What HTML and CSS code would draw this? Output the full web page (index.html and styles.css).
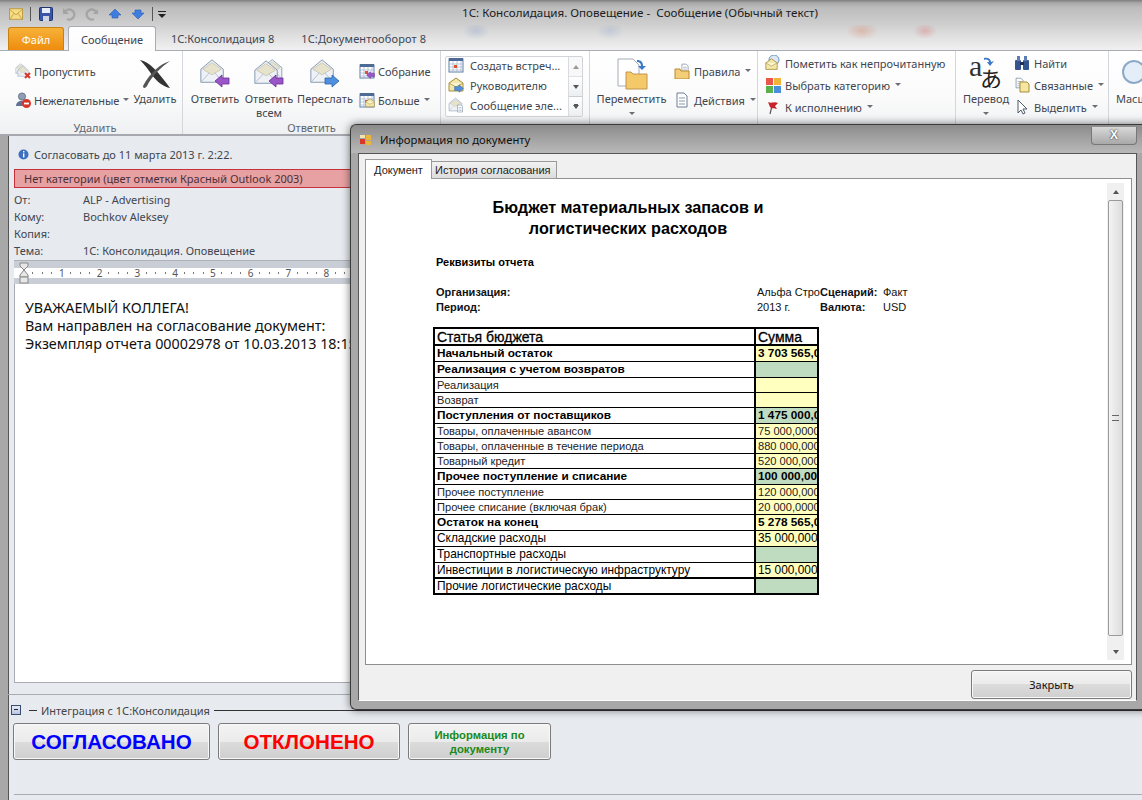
FILE: index.html
```html
<!DOCTYPE html>
<html lang="ru">
<head>
<meta charset="utf-8">
<title>1С: Консолидация. Оповещение - Сообщение</title>
<link rel="stylesheet" href="styles.css">
</head>
<body>
<svg class="defs" width="0" height="0">
  <defs>
    <symbol id="env" viewBox="0 0 30 30">
      <path d="M2 12 L14 2 L26 12 V26 H2Z" fill="#eef1f5" stroke="#7d93ad"/>
      <path d="M4 12 L14 5 L24 12 L14 18Z" fill="#e6e2cc" stroke="#b5b29a" stroke-width=".6"/>
      <path d="M2 26 L11 16 M26 26 L17 16" stroke="#b4c0cf" fill="none"/>
    </symbol>
    <symbol id="arrL" viewBox="0 0 16 14"><path d="M1 7 L8 1 V4 H15 V10 H8 V13Z" fill="#9a55c8" stroke="#6b2c96" stroke-width=".8"/></symbol>
    <symbol id="arrR" viewBox="0 0 16 14"><path d="M15 7 L8 1 V4 H1 V10 H8 V13Z" fill="#4f8fe0" stroke="#2c62a8" stroke-width=".8"/></symbol>
    <symbol id="cal" viewBox="0 0 16 16"><rect x="1" y="2" width="14" height="13" fill="#fff" stroke="#5f7ea8"/><rect x="1" y="1" width="14" height="3" fill="#4d6b94"/><path d="M1 7H15M1 10H15M1 13H15M5 4V15M9 4V15M13 4V15" stroke="#9db3cf" stroke-width=".7"/><rect x="6" y="8" width="3" height="3" fill="#e0532f"/></symbol>
    <symbol id="mini" viewBox="0 0 16 16"><path d="M1 6 L8 1 L15 6 V14 H1Z" fill="#f2e6a8" stroke="#a48d3c"/><path d="M1 6 L8 10 L15 6" fill="#fbf5d2" stroke="#a48d3c" stroke-width=".7"/></symbol>
    <symbol id="folder" viewBox="0 0 16 16"><path d="M1 4 H6 L7 6 H15 V14 H1Z" fill="#f4cd78" stroke="#b98a2e"/></symbol>
    <symbol id="doc" viewBox="0 0 16 16"><path d="M3 1 H10 L13 4 V15 H3Z" fill="#fff" stroke="#6d7f96"/><path d="M5 6H11M5 9H11M5 12H11" stroke="#8b99aa"/></symbol>
  </defs>
</svg>

<div class="app">
  <header class="titlebar">
    <div class="qat">
      <svg class="i14" viewBox="0 0 16 14"><rect x=".5" y="1" width="15" height="12" fill="#f6dd85" stroke="#b8973a"/><path d="M1 2 L8 8 L15 2 M1 13 L6 6 M15 13 L10 6" fill="none" stroke="#c69f3f"/></svg>
      <span class="qsep"></span>
      <svg class="i14" viewBox="0 0 14 14"><rect x=".5" y=".5" width="13" height="13" rx="1" fill="#3a56a8" stroke="#22346e"/><rect x="3" y="1" width="8" height="5" fill="#e8eef8"/><rect x="4" y="9" width="6" height="5" fill="#cfd6e2"/></svg>
      <svg class="i14 dim" viewBox="0 0 14 14"><path d="M3 5 A5 5 0 1 1 5 12" fill="none" stroke="#8c8c8c" stroke-width="2.4"/><path d="M1 1 V7 H7Z" fill="#8c8c8c"/></svg>
      <svg class="i14 dim" viewBox="0 0 14 14"><path d="M11 5 A5 5 0 1 0 9 12" fill="none" stroke="#8c8c8c" stroke-width="2.4"/><path d="M13 2 V7 H8Z" fill="#8c8c8c"/></svg>
      <svg class="i14" viewBox="0 0 14 12"><path d="M7 1 L13 7 H10 V10 H4 V7 H1Z" fill="#3f7ee0" stroke="#2a5cb4" stroke-width=".6"/></svg>
      <svg class="i14" viewBox="0 0 14 12"><path d="M7 11 L13 5 H10 V2 H4 V5 H1Z" fill="#3f7ee0" stroke="#2a5cb4" stroke-width=".6"/></svg>
      <span class="qsep"></span>
      <svg class="qdrop" viewBox="0 0 8 8"><path d="M0 1H8V2H0ZM0 4H8L4 8Z" fill="#222"/></svg>
    </div>
    <div class="wintitle">1С: Консолидация. Оповещение -&nbsp; Сообщение (Обычный текст)</div>
  </header>

  <nav class="tabs">
    <span class="tab-file">Файл</span>
    <span class="tab-active">Сообщение</span>
    <span class="tab t1">1С:Консолидация 8</span>
    <span class="tab t2">1С:Документооборот 8</span>
  </nav>

  <section class="ribbon">
    <div class="grp g-del">
      <div class="grp-body">
        <div class="col two c-del">
          <div class="sm"><svg class="i16" viewBox="0 0 16 16"><use href="#env" width="12" height="12" x="0" y="0"/><use href="#env" width="13" height="13" x="2" y="2"/><path d="M10 10 L15 15 M15 10 L10 15" stroke="#d8362a" stroke-width="2"/></svg>Пропустить</div>
          <div class="sm"><svg class="i16" viewBox="0 0 16 16"><circle cx="7" cy="4.5" r="3.6" fill="#8d9db3" stroke="#4f5f78" stroke-width=".7"/><path d="M1 14 C1 7 13 7 13 14Z" fill="#5f7290"/><circle cx="11.5" cy="11.5" r="4.5" fill="#d8362a"/><path d="M9 11.5H14" stroke="#fff" stroke-width="1.8"/></svg>Нежелательные <i class="caret"></i></div>
        </div>
        <div class="big b-del">
          <svg class="ico32" viewBox="0 0 32 32"><path d="M1 2 C10 3 20 15 31 30 C25 29 18 24 13 17 C9 11 5 6 1 2Z" fill="#333"/><path d="M31 3 C21 6 11 15 4 28 C4 31 7 30 8 28 C13 18 22 9 31 3Z" fill="#555"/></svg>
          <span>Удалить</span>
        </div>
      </div>
      <div class="grp-label">Удалить</div>
    </div>

    <div class="grp g-rep">
      <div class="grp-body">
        <div class="big b-rep1">
          <svg class="ico32" viewBox="0 0 32 32"><use href="#env" width="28" height="28" x="0" y="0"/><use href="#arrL" width="16" height="14" x="15" y="16"/></svg>
          <span>Ответить</span>
        </div>
        <div class="big b-rep2">
          <svg class="ico32" viewBox="0 0 32 32"><use href="#env" width="24" height="24" x="8" y="0"/><use href="#env" width="28" height="28" x="0" y="1"/><use href="#arrL" width="16" height="14" x="15" y="16"/></svg>
          <span>Ответить<br>всем</span>
        </div>
        <div class="big b-rep3">
          <svg class="ico32" viewBox="0 0 32 32"><use href="#env" width="28" height="28" x="0" y="0"/><use href="#arrR" width="16" height="14" x="15" y="16"/></svg>
          <span>Переслать</span>
        </div>
        <div class="col two c-rep">
          <div class="sm"><svg class="i16" viewBox="0 0 16 16"><use href="#cal"/><use href="#arrL" width="9" height="8" x="7" y="8"/></svg>Собрание</div>
          <div class="sm"><svg class="i16" viewBox="0 0 16 16"><use href="#cal"/><use href="#mini" width="10" height="10" x="6" y="6"/></svg>Больше <i class="caret"></i></div>
        </div>
      </div>
      <div class="grp-label">Ответить</div>
    </div>

    <div class="grp g-qs">
      <div class="grp-body">
        <div class="qs">
          <div class="qs-list">
            <div class="qs-item"><svg class="i16" viewBox="0 0 16 16"><use href="#cal"/></svg>Создать встреч...</div>
            <div class="qs-item"><svg class="i16" viewBox="0 0 16 16"><use href="#mini"/><use href="#arrR" width="10" height="9" x="6" y="7"/></svg>Руководителю</div>
            <div class="qs-item"><svg class="i16" viewBox="0 0 16 16"><use href="#env" width="16" height="16"/><use href="#doc" width="8" height="9" x="8" y="7"/></svg>Сообщение эле...</div>
          </div>
          <div class="qs-scroll">
            <span class="qs-b off"><i class="up"></i></span>
            <span class="qs-b"><i class="down"></i></span>
            <span class="qs-b"><i class="down bar"></i></span>
          </div>
        </div>
      </div>
      <div class="grp-label">Быстрые действия</div>
    </div>

    <div class="grp g-mv">
      <div class="grp-body">
        <div class="big b-mv">
          <svg class="ico32" viewBox="0 0 32 32"><path d="M2 1 H17 L23 7 V28 H2Z" fill="#fff" stroke="#a5adb8"/><path d="M10 14 H15 L17 16 H31 V31 H10Z" fill="#f4c969" stroke="#c2954a"/><path d="M21 2 C25 2 27 4 27 8 H30 L26 12 L22 8 H25 C25 6 24 4 21 4Z" fill="#3a78c8"/></svg>
          <span>Переместить<br><i class="caret"></i></span>
        </div>
        <div class="col two c-mv">
          <div class="sm"><svg class="i16" viewBox="0 0 16 16"><use href="#doc" width="10" height="11" x="6" y="0"/><use href="#folder" x="0" y="2"/></svg>Правила <i class="caret"></i></div>
          <div class="sm"><svg class="i16" viewBox="0 0 16 16"><use href="#doc"/></svg>Действия <i class="caret"></i></div>
        </div>
      </div>
      <div class="grp-label">Переместить</div>
    </div>

    <div class="grp g-tag">
      <div class="grp-body">
        <div class="col three c-tag">
          <div class="sm"><svg class="i16" viewBox="0 0 16 16"><circle cx="9" cy="5" r="5" fill="#dce8f6" stroke="#6c94c4"/><use href="#mini" width="13" height="13" x="0" y="3"/></svg>Пометить как непрочитанную</div>
          <div class="sm"><svg class="i16" viewBox="0 0 16 16"><rect width="7" height="7" x="1" y="1" fill="#e8574a"/><rect width="7" height="7" x="9" y="1" fill="#f2b33c"/><rect width="7" height="7" x="1" y="9" fill="#5bb24d"/><rect width="7" height="7" x="9" y="9" fill="#4a8fdc"/></svg>Выбрать категорию <i class="caret"></i></div>
          <div class="sm"><svg class="i16" viewBox="0 0 16 16"><path d="M5 15 L7 7" stroke="#555" stroke-width="1.2"/><path d="M3 3 C6 5 9 2 13 4 L10 7 L12 10 C9 9 6 10 5 8Z" fill="#c8222a"/></svg>К исполнению <i class="caret"></i></div>
        </div>
      </div>
      <div class="grp-label">Теги</div>
    </div>

    <div class="grp g-ed">
      <div class="grp-body">
        <div class="big b-tr">
          <svg class="ico32" viewBox="0 0 34 32"><text x="0" y="20" class="gl-a">a</text><text x="11" y="31" class="gl-j">あ</text><path d="M15 2 C19 1 22 3 22 6 L25 5 L21 10 L18 6 H20 C20 4 18 3 15 4Z" fill="#3a78c8"/></svg>
          <span>Перевод<br><i class="caret"></i></span>
        </div>
        <div class="col three c-ed">
          <div class="sm"><svg class="i16" viewBox="0 0 16 16"><rect x="1" y="5" width="6" height="10" rx="1" fill="#35558f"/><rect x="9" y="5" width="6" height="10" rx="1" fill="#35558f"/><rect x="3" y="1" width="3" height="5" fill="#5e7db5"/><rect x="10" y="1" width="3" height="5" fill="#5e7db5"/><rect x="6" y="7" width="4" height="3" fill="#1d2f55"/></svg>Найти</div>
          <div class="sm"><svg class="i16" viewBox="0 0 16 16"><use href="#doc" width="11" height="12" x="0" y="0"/><path d="M6 5 H13 L15 7 V15 H6Z" fill="#f6e6a0" stroke="#a58d3c"/></svg>Связанные <i class="caret"></i></div>
          <div class="sm"><svg class="i16" viewBox="0 0 16 16"><path d="M4 1 V14 L7 11 L9 15 L11 14 L9 10 H13Z" fill="#fff" stroke="#4d5a6c"/></svg>Выделить <i class="caret"></i></div>
        </div>
      </div>
      <div class="grp-label">Редактирование</div>
    </div>

    <div class="grp g-zoom">
      <div class="grp-body">
        <div class="big b-zoom">
          <svg class="ico32" viewBox="0 0 32 32"><circle cx="18" cy="14" r="11" fill="#e4eef8" stroke="#8ba8c8" stroke-width="2"/></svg>
          <span>Масштаб</span>
        </div>
      </div>
      <div class="grp-label">Масштаб</div>
    </div>
  </section>

  <main class="message">
    <div class="infobar">
      <svg class="i11" viewBox="0 0 11 11"><circle cx="5.5" cy="5.5" r="5" fill="#3f6fc0"/><rect x="5" y="2" width="1.4" height="1.4" fill="#fff"/><rect x="5" y="4.4" width="1.4" height="4" fill="#fff"/></svg>
      Согласовать до 11 марта 2013 г. 2:22.
    </div>
    <div class="catbar">Нет категории (цвет отметки Красный Outlook 2003)</div>
    <dl class="fields">
      <dt>От:</dt><dd>ALP - Advertising</dd>
      <dt>Кому:</dt><dd>Bochkov Aleksey</dd>
      <dt>Копия:</dt><dd></dd>
      <dt>Тема:</dt><dd>1С: Консолидация. Оповещение</dd>
    </dl>
    <div class="ruler">
      <div class="ruler-scale">
        <span>1</span><span>2</span><span>3</span><span>4</span><span>5</span><span>6</span><span>7</span><span>8</span><span>9</span>
      </div>
      <svg class="ruler-mark" viewBox="0 0 10 22" width="10" height="22"><path d="M1 1H9V4L5 8L1 4Z" fill="#e7e7e7" stroke="#888"/><path d="M5 8L9 13V15H1V13Z" fill="#e7e7e7" stroke="#888"/><rect x="1" y="15" width="8" height="6" fill="#e7e7e7" stroke="#888"/></svg>
    </div>
    <div class="body-text">
      <p>УВАЖАЕМЫЙ КОЛЛЕГА!</p>
      <p>Вам направлен на согласование документ:</p>
      <p>Экземпляр отчета 00002978 от 10.03.2013 18:15:47</p>
    </div>
    <div class="integr">
      <div class="integr-head">
        <span class="minus"></span>
        <span class="dash"></span>
        <span class="integr-title">Интеграция с 1С:Консолидация</span>
        <span class="rule"></span>
      </div>
      <div class="actions">
        <button class="btn b-ok">СОГЛАСОВАНО</button>
        <button class="btn b-no">ОТКЛОНЕНО</button>
        <button class="btn b-info">Информация по документу</button>
      </div>
    </div>
  </main>

  <div class="dialog">
    <div class="dlg-title">
      <svg class="i13" viewBox="0 0 13 13"><rect x="1" y="6" width="5" height="5" fill="#d8372c"/><rect x="7" y="2" width="5" height="5" fill="#e9b53a"/><rect x="7" y="8" width="5" height="4" fill="#e9b53a"/><rect x="1" y="2" width="5" height="3" fill="#f2e4b0"/></svg>
      <span>Информация по документу</span>
      <span class="dlg-x">X</span>
    </div>
    <div class="dlg-panel">
      <div class="dlg-tabs">
        <span class="dtab on">Документ</span>
        <span class="dtab">История согласования</span>
      </div>
      <div class="dlg-content">
        <div class="report">
          <h1>Бюджет материальных запасов и<br>логистических расходов</h1>
          <h2>Реквизиты отчета</h2>
          <div class="meta">
            <b>Организация:</b><span class="clip">Альфа Строй</span><b>Сценарий:</b><span>Факт</span>
            <b>Период:</b><span>2013 г.</span><b>Валюта:</b><span>USD</span>
          </div>
          <table class="budget">
            <colgroup><col class="c1"><col class="c2"></colgroup>
            <tr class="r-h"><td>Статья бюджета</td><td>Сумма</td></tr>
            <tr class="r-b"><td>Начальный остаток</td><td class="y">3 703 565,00</td></tr>
            <tr class="r-b"><td>Реализация с учетом возвратов</td><td class="g"></td></tr>
            <tr class="r-s"><td>Реализация</td><td class="y"></td></tr>
            <tr class="r-s"><td>Возврат</td><td class="y"></td></tr>
            <tr class="r-b"><td>Поступления от поставщиков</td><td class="g">1 475 000,00</td></tr>
            <tr class="r-s"><td>Товары, оплаченные авансом</td><td class="y">75 000,00000</td></tr>
            <tr class="r-s"><td>Товары, оплаченные в течение периода</td><td class="y">880 000,00000</td></tr>
            <tr class="r-s"><td>Товарный кредит</td><td class="y">520 000,00000</td></tr>
            <tr class="r-b"><td>Прочее поступление и списание</td><td class="g">100 000,0000</td></tr>
            <tr class="r-s"><td>Прочее поступление</td><td class="y">120 000,00000</td></tr>
            <tr class="r-s"><td>Прочее списание (включая брак)</td><td class="y">20 000,00000</td></tr>
            <tr class="r-b"><td>Остаток на конец</td><td class="y">5 278 565,00</td></tr>
            <tr class="r-m"><td>Складские расходы</td><td class="y">35 000,00000</td></tr>
            <tr class="r-m"><td>Транспортные расходы</td><td class="g"></td></tr>
            <tr class="r-m"><td>Инвестиции в логистическую инфраструктуру</td><td class="y">15 000,00000</td></tr>
            <tr class="r-m r-last"><td>Прочие логистические расходы</td><td class="g"></td></tr>
          </table>
        </div>
        <div class="vscroll">
          <span class="vs-btn"><i class="up"></i></span>
          <span class="vs-thumb"><i class="grip"></i></span>
          <span class="vs-btn"><i class="down"></i></span>
        </div>
      </div>
      <div class="dlg-foot"><button class="btn b-close">Закрыть</button></div>
    </div>
  </div>
</div>
</body>
</html>
```

FILE: styles.css
```css
* { box-sizing: border-box; }
html, body { margin: 0; padding: 0; }
body { width: 1142px; height: 800px; overflow: hidden; font-family: "Noto Sans", "Open Sans", sans-serif; font-size: 11px; color: #3f4650; }
.defs { position: absolute; }
svg { display: block; flex: none; }
.app { position: relative; width: 1142px; height: 800px; overflow: hidden; background: #e7eaef; display: flex; flex-direction: column; }

.titlebar { height: 25px; flex: none; display: flex; align-items: center; position: relative; padding: 3px 0 0 9px;
  background: linear-gradient(#7e7e7e 0, #a9a9a9 3px, #bdbdbd 8px, #cfcfcf 25px); }
.qat { display: flex; align-items: center; gap: 8px; }
.i14 { width: 14px; height: 14px; }
.dim { opacity: .55; }
.qsep { width: 1px; height: 14px; background: #555; margin: 0 0 0 -1px; }
.qat svg.i14 + svg.i14 { margin-left: 1px; }
.qdrop { width: 8px; height: 8px; margin-left: -3px; }
.wintitle { position: absolute; left: 462px; top: 5px; font-size: 11.6px; color: #1c1c1c; white-space: nowrap; }

.tabs { height: 26px; flex: none; display: flex; align-items: flex-end; padding-left: 8px; position: relative; font-size: 11px; color: #3d4654;
  background:
    radial-gradient(ellipse 14px 9px at 476px 6px, rgba(120,150,200,.28), transparent),
    radial-gradient(ellipse 14px 9px at 610px 6px, rgba(120,150,200,.22), transparent),
    radial-gradient(ellipse 16px 9px at 862px 6px, rgba(220,120,80,.32), transparent),
    radial-gradient(ellipse 12px 8px at 925px 6px, rgba(220,80,80,.28), transparent),
    linear-gradient(#cfcfcf 0, #dedede 10px, #f2f2f2 26px);
  border-bottom: 1px solid #a9adb3; }
.tab-file { width: 56px; height: 23px; color: #fff; display: flex; align-items: center; justify-content: center; border-radius: 3px 3px 0 0; border: 1px solid #c9800e; border-bottom: 0; background: linear-gradient(#f7b23a, #ee8c0d); }
.tab-active { width: 88px; height: 25px; margin: 0 0 -1px 4px; display: flex; align-items: center; justify-content: center; background: linear-gradient(#fff, #fbfbfb); border: 1px solid #a9adb3; border-bottom: 0; border-radius: 3px 3px 0 0; position: relative; }
.tab { height: 24px; display: flex; align-items: center; white-space: nowrap; }
.t1 { margin-left: 15px; }
.t2 { margin-left: 27px; letter-spacing: .15px; }

.ribbon { height: 85px; flex: none; display: flex; padding-left: 8px; border-bottom: 2px solid #a6aab0; background: linear-gradient(#fff 0, #fbfbfb 45px, #eef0f2 84px); color: #3f4650; position: relative; }
.grp { display: flex; flex-direction: column; border-right: 1px solid #d3d6da; flex: none; }
.grp-body { height: 70px; display: flex; flex: none; }
.grp-label { text-align: center; color: #5f6670; line-height: 14px; }
.g-del { width: 175px; }
.g-rep { width: 258px; }
.g-qs { width: 149px; }
.g-mv { width: 168px; }
.g-tag { width: 198px; }
.g-ed { width: 153px; }
.g-zoom { width: 40px; border-right: 0; }
.col { display: flex; flex-direction: column; }
.two { padding-top: 12px; gap: 13px; }
.three { padding-top: 4px; gap: 6px; }
.sm { display: flex; align-items: center; gap: 3px; height: 16px; white-space: nowrap; }
.i16 { width: 16px; height: 16px; }
.caret { display: inline-block; width: 0; height: 0; border: 3px solid transparent; border-top: 3px solid #6a6f77; border-bottom: 0; margin: 0 0 1px 1px; vertical-align: middle; }
.big { display: flex; flex-direction: column; align-items: center; text-align: center; padding-top: 7px; line-height: 14px; white-space: nowrap; }
.big span { margin-top: 2px; }
.big .caret { margin-left: 0; }
.ico32 { width: 32px; height: 32px; }
.c-del { width: 122px; padding-left: 7px; }
.b-del { width: 50px; }
.b-rep1 { width: 50px; margin-left: 7px; }
.b-rep2 { width: 50px; margin-left: 4px; }
.b-rep3 { width: 56px; margin-left: 3px; }
.c-rep { margin-left: 6px; }
.qs { display: flex; width: 138px; height: 61px; margin: 5px 0 0 4px; border: 1px solid #d0d3d8; border-radius: 2px; background: #fff; }
.qs-list { flex: 1; margin-top: -2px; padding-left: 2px; }
.qs-item { display: flex; align-items: center; gap: 6px; height: 20px; white-space: nowrap; }
.qs-scroll { width: 14px; display: flex; flex-direction: column; border-left: 1px solid #d8dbdf; }
.qs-b { flex: 1; display: flex; align-items: center; justify-content: center; border-bottom: 1px solid #c9ccd1; background: linear-gradient(#fff, #eceef0); }
.qs-b:last-child { border-bottom: 0; }
.qs-b.off { background: #f4f5f6; opacity: .6; }
.up { width: 0; height: 0; border: 3px solid transparent; border-bottom: 4px solid #555; border-top: 0; display: block; }
.down { width: 0; height: 0; border: 3px solid transparent; border-top: 4px solid #555; border-bottom: 0; display: block; }
.down.bar { box-shadow: 0 -2px 0 -1px #555; }
.b-mv { width: 81px; margin-left: 1px; margin-right: 2px; }
.c-mv .sm { gap: 4px; }
.c-tag { margin-left: 7px; }
.c-tag .sm { gap: 4px; }
.b-tr { width: 50px; margin-left: 5px; padding-top: 5px; }
.b-tr span { margin-top: 4px; }
.b-tr .ico32 { width: 34px; }
.gl-a { font: 30px "Liberation Serif", serif; fill: #333; }
.gl-j { font: 22px "Noto Sans CJK JP", sans-serif; fill: #222; }
.c-ed { margin-left: 3px; }
.c-ed .sm { gap: 4px; }
.b-zoom { width: 40px; margin-left: 7px; align-items: flex-start; }

.message { flex: 1; min-height: 0; position: relative; display: flex; flex-direction: column; background: #e7eaef; border-left: 8px solid #a8a8a8; padding-left: 6px; box-shadow: inset 1px 0 0 #555; }
.infobar { height: 33px; display: flex; align-items: center; gap: 5px; padding: 4px 0 0 4px; }
.i11 { width: 11px; height: 11px; }
.catbar { height: 19px; padding-left: 9px; display: flex; align-items: center; background: #e8a1a3; border: 1px solid #c8303c; color: #4a3038; }
.fields { margin: 3px 0 0; display: grid; grid-template-columns: 69px 1fr; grid-auto-rows: 17px; line-height: 17px; }
.fields dt, .fields dd { margin: 0; }
.ruler { height: 24px; margin-top: 1px; background: #c9ced6; position: relative; border-top: 1px solid #aeb3ba; flex: none; }
.ruler-scale { position: absolute; left: 0; right: 0; top: 7px; height: 10px; display: flex; padding-left: 43px; font-size: 10px; line-height: 10px; color: #555; gap: 28.2px;
  background-color: #fff;
  background-image: repeating-linear-gradient(90deg, #777 0, #777 1px, transparent 1px, transparent 9.45px);
  background-size: 100% 2px; background-position: 9px 4px; background-repeat: no-repeat; }
.ruler-scale span { width: 9.6px; text-align: center; background: #fff; }
.ruler-mark { position: absolute; left: 5px; top: 1px; }
.body-text { height: 399px; background: #fff; padding: 15px 0 0 10px; font-size: 14.33px; line-height: 18px; color: #101010; border-left: 1px solid #a9adb3; border-bottom: 1px solid #a9adb3; white-space: nowrap; overflow: hidden; flex: none; }
.body-text p { margin: 0; }
.integr { margin: 11px 0 0 -6px; border-top: 1px solid #a9adb3; padding-top: 7px; flex: 1; position: relative; }
.integr::after { content: ""; display: block; position: absolute; left: 6px; right: 0; bottom: 0; height: 5px; border-top: 1px solid #a9adb3; }
.integr-head { display: flex; align-items: center; gap: 4px; height: 16px; margin-left: 3px; }
.minus { width: 10px; height: 10px; border: 1px solid #3a4a70; background: linear-gradient(#e6ecf6, #b9c6de); position: relative; }
.minus::after { content: ""; position: absolute; left: 2px; top: 3px; width: 4px; height: 1px; background: #223; }
.dash { width: 8px; height: 1px; background: #333; margin-left: 4px; }
.integr-title { white-space: nowrap; color: #444; font-size: 11px; }
.rule { flex: 1; height: 1px; background: #333; }
.actions { display: flex; gap: 8px; margin: 5px 0 0 5px; }
.btn { height: 37px; border: 1px solid #7b7b7b; border-radius: 3px; padding: 0; font-family: "Liberation Sans", sans-serif; background: linear-gradient(#f3f3f3 0, #ebebeb 50%, #dcdcdc 50%, #cfcfcf 100%); box-shadow: inset 0 0 0 1px #f8f8f8; }
.b-ok { width: 197px; color: #0000ff; font-size: 20.6px; font-weight: bold; }
.b-no { width: 182px; color: #ff0000; font-size: 20.6px; font-weight: bold; }
.b-info { width: 143px; color: #1a8a1a; font-size: 11.3px; font-weight: bold; line-height: 14px; padding: 0 22px; }

.dialog { position: absolute; left: 350px; top: 124px; width: 800px; height: 586px; border: 1px solid #3a3a3a; border-right: 0; border-radius: 6px 0 0 6px; box-shadow: 0 0 8px rgba(0,0,0,.55); display: flex; flex-direction: column; padding: 0 13px 8px 7px;
  background: linear-gradient(#8b8b8b 0, #a3a3a3 14px, #b8b8b8 28px, #a8a8a8 28px); }
.dlg-title { height: 28px; display: flex; align-items: center; gap: 8px; font-size: 11.3px; color: #111; position: relative; flex: none; padding-left: 1px; }
.i13 { width: 13px; height: 13px; }
.dlg-x { position: absolute; left: 733px; top: 2px; width: 46px; height: 18px; border: 1px solid #777; border-top: 0; border-radius: 0 0 4px 4px; background: linear-gradient(#d8d8d8, #a9a9a9); font: bold 12px "Liberation Sans", sans-serif; color: #fff; text-align: center; line-height: 17px; text-shadow: 0 0 2px #000; }
.dlg-panel { flex: 1; min-height: 0; background: #f0f0f0; border: 1px solid #555; border-bottom-color: #fff; padding: 5px 4px 0 6px; display: flex; flex-direction: column; font-family: "Liberation Sans", sans-serif; }
.dlg-tabs { display: flex; align-items: flex-end; height: 20px; flex: none; font-size: 11px; color: #222; position: relative; z-index: 1; margin-bottom: -1px; }
.dtab { height: 18px; padding: 0 3px; display: flex; align-items: center; border: 1px solid #9a9a9a; border-left: 0; background: linear-gradient(#f2f2f2, #dcdcdc); white-space: nowrap; width: 125px; }
.dtab.on { height: 20px; width: 67px; justify-content: center; background: #fff; border-left: 1px solid #9a9a9a; border-bottom: 0; }
.dlg-content { height: 487px; flex: none; background: #fff; border: 1px solid #8f8f8f; display: flex; justify-content: space-between; padding: 4px 7px 4px 0; }
.report { width: 470px; color: #000; padding: 14px 0 0 67px; font-family: "Liberation Sans", sans-serif; }
.report h1 { margin: 0; width: 390px; text-align: center; font-size: 16.2px; line-height: 21px; font-weight: bold; }
.report h2 { margin: 16px 0 0 3px; font-size: 11px; line-height: 14px; font-weight: bold; }
.meta { margin: 16px 0 0 3px; display: grid; grid-template-columns: 321px 63px 63px 60px; grid-auto-rows: 15px; line-height: 15px; font-size: 11px; color: #111; white-space: nowrap; }
.meta .clip { overflow: hidden; }
.budget { margin: 12px 0 0; width: 384px; table-layout: fixed; border-collapse: collapse; border: 2px solid #000; color: #000; }
.c1 { width: 321px; }
.c2 { width: 63px; }
.budget td { padding: 1px 0 0 2px; border: 1px solid #000; white-space: nowrap; overflow: hidden; }
.budget td:first-child { border-right: 2px solid #000; }
.r-h td { height: 17px; font-size: 14px; line-height: 14px; border-bottom: 2px solid #000; -webkit-text-stroke: .3px #000; }
.r-b td { height: 16px; font-size: 11.8px; line-height: 13px; font-weight: bold; }
.r-s td { height: 15px; font-size: 11.1px; line-height: 12px; color: #222; }
.r-m td { height: 16px; font-size: 11.9px; line-height: 13px; }
.r-last td { border-top: 2px solid #000; }
.y { background: #ffffc0; }
.g { background: #c0dcc0; }
.vscroll { width: 17px; display: flex; flex-direction: column; background: #f0f0f0; }
.vs-btn { height: 17px; display: flex; align-items: center; justify-content: center; flex: none; }
.vs-thumb { flex: 1; margin: 0 1px 7px; border: 1px solid #9a9a9a; border-radius: 2px; background: linear-gradient(90deg, #f4f4f4, #dcdcdc); display: flex; align-items: center; justify-content: center; }
.grip { width: 7px; height: 6px; border-top: 1px solid #666; border-bottom: 1px solid #666; position: relative; }
.dlg-foot { display: flex; justify-content: flex-end; padding-top: 5px; }
.b-close { width: 161px; height: 29px; font-family: "Noto Sans", sans-serif; font-size: 11px; color: #111; }
```
